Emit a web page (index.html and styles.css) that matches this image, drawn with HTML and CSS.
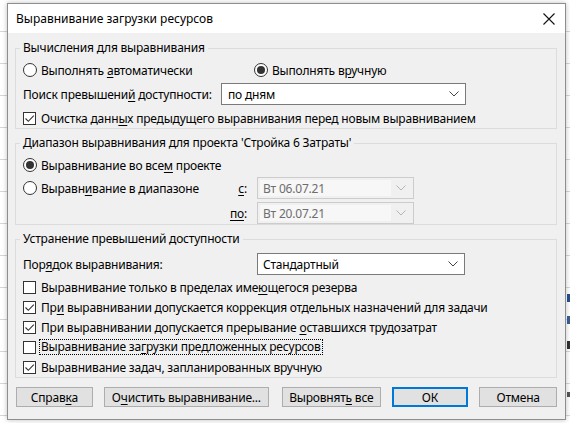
FILE: index.html
```html
<!DOCTYPE html>
<html lang="ru">
<head>
<meta charset="utf-8">
<title>Выравнивание загрузки ресурсов</title>
<link rel="stylesheet" href="styles.css">
</head>
<body>
<div class="desktop">
  <div class="sheet">
    <span class="mark m1"></span>
    <span class="mark m2"></span>
    <span class="mark m3"></span>
    <span class="mark m4"></span>
  </div>
  <div class="dialog">
    <div class="titlebar">
      <span class="title">Выравнивание загрузки ресурсов</span>
      <svg class="close" width="12" height="12" viewBox="0 0 12 12"><path d="M0.5 0.5 L11.5 11.5 M11.5 0.5 L0.5 11.5" stroke="#111" stroke-width="1.1" fill="none"/></svg>
    </div>
    <div class="content">
      <fieldset class="group g1">
        <legend>Вычисления для выравнивания</legend>
        <div class="row first">
          <label class="opt auto"><span class="radio"></span><span>Выполнять <u>а</u>втоматически</span></label>
          <label class="opt"><span class="radio on"></span><span>Выполнять в<u>р</u>учную</span></label>
        </div>
        <div class="row tall">
          <span class="lbl lbl1">Поиск превышени<u>й</u> доступности:</span>
          <div class="select sel1"><span>по дням</span><svg width="10" height="6" viewBox="0 0 10 6"><path d="M0.5 0.5 L5 5 L9.5 0.5" stroke="#444" fill="none"/></svg></div>
        </div>
        <div class="row">
          <label class="opt"><span class="check on"><svg width="11" height="11" viewBox="0 0 11 11"><path d="M1.5 5.5 L4.3 8.3 L9.8 2.6" stroke="#333" stroke-width="1.1" fill="none"/></svg></span><span>Очистка данн<u>ы</u>х предыдущего выравнивания перед новым выравниванием</span></label>
        </div>
      </fieldset>

      <fieldset class="group g2">
        <legend>Диапазон выравнивания для проекта 'Стройка 6 Затраты'</legend>
        <div class="row first">
          <label class="opt"><span class="radio on"></span><span>Выравнивание во все<u>м</u> проекте</span></label>
        </div>
        <div class="range">
          <label class="opt"><span class="radio"></span><span>Выравн<u>и</u>вание в диапазоне</span></label>
          <span class="dlbl r1"><u>с</u>:</span>
          <div class="date d1"><span class="val">Вт 06.07.21</span><span class="arr"><svg width="10" height="6" viewBox="0 0 10 6"><path d="M0.5 0.5 L5 5 L9.5 0.5" stroke="#b5b5b5" fill="none"/></svg></span></div>
          <span class="dlbl r2"><u>по</u>:</span>
          <div class="date d2"><span class="val">Вт 20.07.21</span><span class="arr"><svg width="10" height="6" viewBox="0 0 10 6"><path d="M0.5 0.5 L5 5 L9.5 0.5" stroke="#b5b5b5" fill="none"/></svg></span></div>
        </div>
      </fieldset>

      <fieldset class="group g3">
        <legend>Устранение превышений доступности</legend>
        <div class="row tall first">
          <span class="lbl lbl2">Пор<u>я</u>док выравнивания:</span>
          <div class="select sel2"><span>Стандартный</span><svg width="10" height="6" viewBox="0 0 10 6"><path d="M0.5 0.5 L5 5 L9.5 0.5" stroke="#444" fill="none"/></svg></div>
        </div>
        <div class="checks">
          <div class="row"><label class="opt"><span class="check"></span><span>Выравнивание только в пределах име<u>ю</u>щегося резерва</span></label></div>
          <div class="row"><label class="opt"><span class="check on"><svg width="11" height="11" viewBox="0 0 11 11"><path d="M1.5 5.5 L4.3 8.3 L9.8 2.6" stroke="#333" stroke-width="1.1" fill="none"/></svg></span><span>Пр<u>и</u> выравнивании допускается коррекция отдельных назначений для задачи</span></label></div>
          <div class="row"><label class="opt"><span class="check on"><svg width="11" height="11" viewBox="0 0 11 11"><path d="M1.5 5.5 L4.3 8.3 L9.8 2.6" stroke="#333" stroke-width="1.1" fill="none"/></svg></span><span>При выравнивании допускается прерывание <u>о</u>ставшихся трудозатрат</span></label></div>
          <div class="row"><label class="opt"><span class="check"></span><span class="focus">Выравнивание за<u>г</u>рузки предложенных ресурсов</span></label></div>
          <div class="row"><label class="opt"><span class="check on"><svg width="11" height="11" viewBox="0 0 11 11"><path d="M1.5 5.5 L4.3 8.3 L9.8 2.6" stroke="#333" stroke-width="1.1" fill="none"/></svg></span><span>Выравнивание задач, запланированных вручную</span></label></div>
        </div>
      </fieldset>

      <div class="buttons">
        <button class="btn b-help"><span>Справ<u>к</u>а</span></button>
        <button class="btn b-clear"><span>О<u>ч</u>истить выравнивание...</span></button>
        <button class="btn b-all"><span>Выровнят<u>ь</u> все</span></button>
        <button class="btn b-ok"><span>ОК</span></button>
        <button class="btn b-cancel"><span>Отмена</span></button>
      </div>
    </div>
  </div>
</div>
</body>
</html>
```

FILE: styles.css
```css
* { box-sizing: border-box; }
html, body { margin: 0; padding: 0; }
body {
  font-family: "Noto Sans", "Open Sans", sans-serif;
  font-size: 12px;
  letter-spacing: -0.2px;
  color: #000;
  background: #fff;
}
u { text-decoration: underline; text-underline-offset: 2px; text-decoration-thickness: 1px; }

.desktop {
  position: relative;
  width: 570px;
  height: 423px;
  overflow: hidden;
  padding: 3px 0 0 7px;
  background: #fff repeating-linear-gradient(to bottom, transparent 0, transparent 31px, #d6d6d6 31px, #d6d6d6 32px);
}
.sheet { position: absolute; left: 566px; top: 0; width: 4px; height: 423px; }
.mark { position: absolute; left: 1px; width: 3px; height: 8px; }
.m1 { top: 294px; background: #2a4f8f; }
.m2 { top: 316px; background: #3a5f9a; }
.m3 { top: 341px; background: #333; }
.m4 { top: 392px; height: 5px; background: #555; }

.dialog {
  position: relative;
  z-index: 1;
  width: 559px;
  height: 417px;
  background: #f0f0f0;
  border: 1px solid #8e8e8e;
  box-shadow: 0 0 5px rgba(0,0,0,0.25);
  display: flex;
  flex-direction: column;
}
.titlebar {
  height: 29px;
  flex: none;
  background: #fff;
  display: flex;
  align-items: center;
  justify-content: space-between;
  padding: 0 10px 0 8px;
}
.title { font-size: 12px; letter-spacing: 0; }
.close { display: block; margin-top: 1px; }

.content {
  padding: 7px 8px 0 7px;
  display: flex;
  flex-direction: column;
}
fieldset.group {
  margin: 0;
  min-width: 0;
  border: 1px solid #dcdcdc;
  padding: 0 7px;
}
fieldset.group + fieldset.group { margin-top: 6px; }
fieldset.group.g3 { margin-top: 8px; }
legend {
  padding: 0 3px;
  margin-left: -3px;
  line-height: 16px;
}
.g1 { padding-bottom: 1px; }
.g2 { padding-bottom: 6px; }
.g3 { padding-bottom: 5px; }

.row { display: flex; align-items: center; height: 20px; margin-top: 3px; }
.row.tall { height: 22px; }
.row.first { margin-top: 4px; }
.g3 .row.first { margin-top: 6px; }
.checks { margin-top: 2px; }
.checks .row { margin-top: 0; }

.opt { display: flex; align-items: center; white-space: nowrap; }
.auto { width: 231px; }
.lbl1 { width: 198px; }
.lbl2 { width: 234px; }

.radio {
  width: 14px; height: 14px;
  border: 1px solid #333;
  border-radius: 50%;
  background: #fff;
  margin-right: 4px;
  display: flex; align-items: center; justify-content: center;
  flex: none;
}
.radio.on::after {
  content: "";
  width: 8px; height: 8px;
  border-radius: 50%;
  background: #333;
}
.check {
  width: 13px; height: 13px;
  border: 1px solid #333;
  background: #fff;
  margin-right: 5px;
  display: flex; align-items: center; justify-content: center;
  flex: none;
}
.check svg { display: block; }
.focus {
  border: 1px dotted #000;
  padding: 0 1px;
  margin-left: -2px;
  line-height: 14px;
}

.select {
  height: 22px;
  background: #fff;
  border: 1px solid #7a7a7a;
  display: flex;
  align-items: center;
  justify-content: space-between;
  padding: 0 6px 0 6px;
}
.select svg { display: block; }
.sel1 { width: 245px; }
.sel2 { width: 208px; padding-left: 5px; }

.range {
  display: grid;
  grid-template-columns: 190px 24px 157px;
  grid-template-rows: 22px 22px;
  column-gap: 10px;
  row-gap: 3px;
  margin-top: 2px;
  align-items: center;
}
.range .opt { grid-column: 1; grid-row: 1; }
.dlbl { grid-column: 2; text-align: right; }
.dlbl.r1 { grid-row: 1; }
.dlbl.r2 { grid-row: 2; }
.date.d1 { grid-column: 3; grid-row: 1; }
.date.d2 { grid-column: 3; grid-row: 2; }
.date {
  height: 22px;
  border: 1px solid #cccccc;
  background: #f0f0f0;
  display: flex;
  align-items: stretch;
  padding: 2px 0 2px 2px;
}
.date .val {
  flex: 1;
  background: #f7f7f7;
  color: #6d6d6d;
  padding-left: 3px;
  display: flex;
  align-items: center;
}
.date .arr {
  width: 22px;
  display: flex;
  align-items: center;
  justify-content: center;
  padding-right: 2px;
}
.date svg { display: block; }

.buttons {
  display: flex;
  gap: 11px;
  margin-top: 9px;
  margin-left: 1px;
}
.btn {
  height: 20px;
  padding: 0;
  border: 1px solid #adadad;
  background: #e1e1e1;
  font: inherit;
  letter-spacing: inherit;
  color: #000;
  display: flex;
  align-items: center;
  justify-content: center;
}
.b-help { width: 77px; }
.b-clear { width: 166px; }
.b-all { width: 99px; margin-left: 2px; }
.b-ok { width: 77px; border-color: #0078d7; box-shadow: inset 0 0 0 1px #0078d7; }
.b-cancel { width: 78px; }
```
